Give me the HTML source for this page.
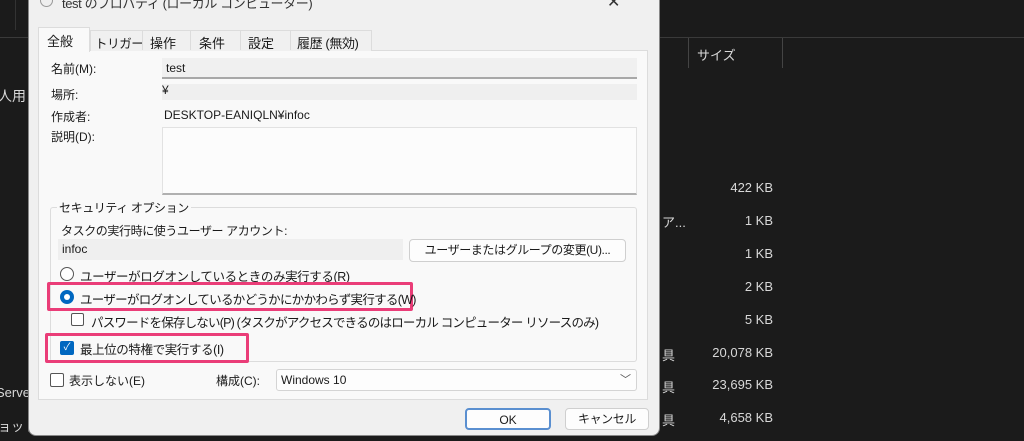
<!DOCTYPE html>
<html><head><meta charset="utf-8"><style>
*{margin:0;padding:0;box-sizing:border-box}
body{width:1024px;height:441px;background:#1b1b1b;position:relative;overflow:hidden;font-family:"Liberation Sans","Noto Sans CJK JP",sans-serif;font-size:12px;color:#1a1a1a}
.a{position:absolute;white-space:nowrap}
.w{color:#d8d8d8;font-size:13px}
.r{text-align:right;width:100px}
.dlg{position:absolute;left:28px;top:-10px;width:632px;height:446px;background:#f0f0f0;border:1px solid #888;border-radius:0 0 8px 8px}
.inp{position:absolute;background:#f0f0f0;border-bottom:2px solid #a8a8a8}
.btn{position:absolute;background:#fdfdfd;border:1px solid #cfcfcf;border-radius:4px;text-align:center;font-size:12px}
.pink{position:absolute;border:3px solid #ea3d78;border-radius:2px}
.chk{position:absolute;width:13px;height:13px;border:1px solid #555;border-radius:2px;background:#fff}
.t{letter-spacing:-0.4px}
</style></head><body>
<div class="a" style="left:0;top:37px;width:28px;border-top:1px solid #3a3a3a"></div>
<div class="a" style="left:15px;top:0;height:30px;border-left:1px solid #333"></div>
<div class="a w" style="left:-2px;top:86px;font-size:14px">人用</div>
<div class="a w" style="left:-4px;top:385px;font-size:13px">Serve</div>
<div class="a w" style="left:-2px;top:416px;font-size:13px">ョット</div>
<div class="a" style="left:660px;top:37px;width:364px;border-top:1px solid #3a3a3a"></div>
<div class="a" style="left:688px;top:38px;height:30px;border-left:1px solid #444"></div>
<div class="a" style="left:782px;top:38px;height:30px;border-left:1px solid #444"></div>
<div class="a w" style="left:697px;top:45px">サイズ</div>
<div class="a w" style="left:662px;top:212px">ア...</div>
<div class="a w" style="left:662px;top:345px">具</div>
<div class="a w" style="left:662px;top:377px">具</div>
<div class="a w" style="left:662px;top:410px">具</div>
<div class="a w r" style="left:673px;top:180px">422 KB</div>
<div class="a w r" style="left:673px;top:213px">1 KB</div>
<div class="a w r" style="left:673px;top:246px">1 KB</div>
<div class="a w r" style="left:673px;top:279px">2 KB</div>
<div class="a w r" style="left:673px;top:312px">5 KB</div>
<div class="a w r" style="left:673px;top:345px">20,078 KB</div>
<div class="a w r" style="left:673px;top:377px">23,695 KB</div>
<div class="a w r" style="left:673px;top:410px">4,658 KB</div>

<div class="dlg"></div>
<div class="a" style="left:40px;top:-6px;width:13px;height:13px;border-radius:50%;border:1px solid #999;background:#eee"></div>
<div class="a t" style="left:62px;top:-7px;font-size:13px;color:#333">test のプロパティ (ローカル コンピューター)</div>
<div class="a" style="left:607px;top:-8px;font-size:16px;color:#333">✕</div>
<div class="a" style="left:38px;top:50px;width:610px;height:350px;background:#f9f9f9;border:1px solid #dcdcdc"></div>
<div class="a" style="left:90px;top:30px;width:282px;height:21px;background:#f0f0f0;border:1px solid #dcdcdc;border-bottom:none"></div>
<div class="a" style="left:38px;top:27px;width:52px;height:25px;background:#f9f9f9;border:1px solid #dcdcdc;border-bottom:none"></div>
<div class="a" style="left:47px;top:31px;font-size:13px">全般</div>
<div class="a t" style="left:95px;top:33px;font-size:12.5px">トリガー</div>
<div class="a" style="left:150px;top:33px;font-size:13px">操作</div>
<div class="a" style="left:199px;top:33px;font-size:13px">条件</div>
<div class="a" style="left:248px;top:33px;font-size:13px">設定</div>
<div class="a t" style="left:297px;top:33px;font-size:13px">履歴 (無効)</div>
<div class="a" style="left:142px;top:30px;height:20px;border-left:1px solid #dcdcdc"></div>
<div class="a" style="left:190px;top:30px;height:20px;border-left:1px solid #dcdcdc"></div>
<div class="a" style="left:240px;top:30px;height:20px;border-left:1px solid #dcdcdc"></div>
<div class="a" style="left:290px;top:30px;height:20px;border-left:1px solid #dcdcdc"></div>

<div class="a" style="left:51px;top:60px">名前(M):</div>
<div class="inp" style="left:162px;top:58px;width:475px;height:21px"></div>
<div class="a" style="left:166px;top:61px">test</div>
<div class="a" style="left:51px;top:86px">場所:</div>
<div class="a" style="left:162px;top:84px;width:475px;height:16px;background:#efefef"></div>
<div class="a" style="left:162px;top:83px">¥</div>
<div class="a" style="left:51px;top:108px">作成者:</div>
<div class="a" style="left:164px;top:108px">DESKTOP-EANIQLN¥infoc</div>
<div class="a" style="left:51px;top:128px">説明(D):</div>
<div class="a" style="left:162px;top:127px;width:475px;height:68px;background:#fcfcfc;border:1px solid #e2e2e2;border-bottom:2px solid #b0b0b0"></div>

<div class="a" style="left:50px;top:207px;width:587px;height:155px;border:1px solid #dcdcdc;border-radius:3px"></div>
<div class="a t" style="left:57px;top:199px;background:#f9f9f9;padding:0 2px">セキュリティ オプション</div>
<div class="a t" style="left:61px;top:222px">タスクの実行時に使うユーザー アカウント:</div>
<div class="a" style="left:58px;top:239px;width:345px;height:21px;background:#efefef"></div>
<div class="a" style="left:62px;top:242px">infoc</div>
<div class="btn t" style="left:409px;top:239px;width:217px;height:23px;line-height:21px">ユーザーまたはグループの変更(U)...</div>
<div class="a" style="left:60px;top:267px;width:14px;height:14px;border-radius:50%;border:1px solid #555;background:#fff"></div>
<div class="a t" style="left:80px;top:266px;font-size:12.5px">ユーザーがログオンしているときのみ実行する(R)</div>
<div class="pink" style="left:47px;top:282px;width:366px;height:29px"></div>
<div class="a" style="left:60px;top:290px;width:14px;height:14px;border-radius:50%;background:#0067c0"></div>
<div class="a" style="left:64px;top:294px;width:6px;height:6px;border-radius:50%;background:#fff"></div>
<div class="a" style="left:80px;top:289px;font-size:12.5px;letter-spacing:-0.7px">ユーザーがログオンしているかどうかにかかわらず実行する(W)</div>
<div class="chk" style="left:71px;top:313px"></div>
<div class="a" style="left:91px;top:312px;font-size:12.5px;letter-spacing:-0.8px">パスワードを保存しない(P) (タスクがアクセスできるのはローカル コンピューター リソースのみ)</div>
<div class="pink" style="left:45px;top:333px;width:204px;height:30px"></div>
<div class="a" style="left:60px;top:341px;width:14px;height:14px;border-radius:2px;background:#0067c0;color:#fff;font-size:10px;line-height:14px;text-align:center">✓</div>
<div class="a t" style="left:80px;top:339px;font-size:12.5px">最上位の特権で実行する(I)</div>

<div class="chk" style="left:50px;top:373px;width:14px;height:14px"></div>
<div class="a" style="left:69px;top:372px">表示しない(E)</div>
<div class="a" style="left:216px;top:372px">構成(C):</div>
<div class="a" style="left:276px;top:369px;width:361px;height:22px;background:#fdfdfd;border:1px solid #d4d4d4;border-radius:3px"></div>
<div class="a" style="left:281px;top:373px">Windows 10</div>
<div class="a" style="left:620px;top:371px;font-size:11px;color:#555">﹀</div>

<div class="btn" style="left:465px;top:408px;width:86px;height:22px;line-height:20px;border:2px solid #5a8fd0">OK</div>
<div class="btn t" style="left:565px;top:408px;width:84px;height:22px;line-height:20px">キャンセル</div>
</body></html>
